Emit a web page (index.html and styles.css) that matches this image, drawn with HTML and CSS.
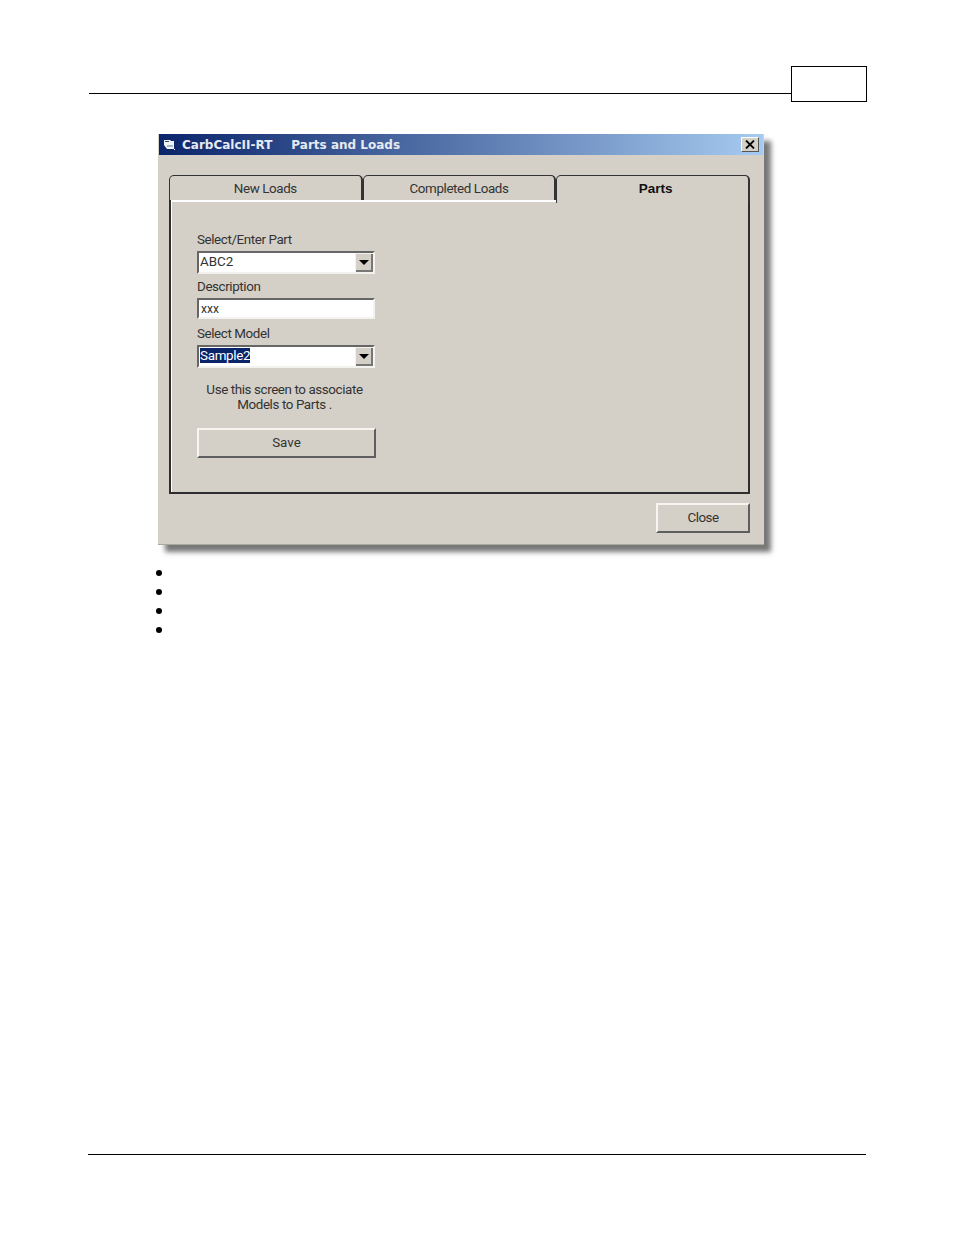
FILE: index.html
```html
<!DOCTYPE html>
<html>
    <head>
        <title>CarbCalcII-RT Parts and Loads</title>
        <meta charset="utf-8" />
        <link rel="stylesheet" href="styles.css">
    </head>
    <body>
        <div class="pageHeader">
            <div class="headerLine"></div>
            <div class="pageNumber"></div>
        </div>

        <div class="dialog">
            <div class="titleBar">
                <svg class="appIcon" width="12" height="12" viewBox="0 0 12 12">
                    <path d="M0 1h6l1 1h3v8H3L0 6z" fill="#f2f5f8"/>
                    <path d="M1 2h4v1H1z" fill="#33456e"/>
                    <path d="M3 6h6v2H3z" fill="#a8b6c8"/>
                    <path d="M10 10h1v1h-1z" fill="#fff"/>
                </svg>
                <span class="titleText">CarbCalcII-RT</span>
                <span class="titleText titleSecond">Parts and Loads</span>
                <div class="closeX">
                    <svg width="10" height="9" viewBox="0 0 10 9">
                        <path d="M1 0.5L9 8.5M9 0.5L1 8.5" stroke="#000" stroke-width="1.8" fill="none"/>
                    </svg>
                </div>
            </div>

            <div class="dialogBody">
                <div class="tabs">
                    <div class="tab">New Loads</div>
                    <div class="tab">Completed Loads</div>
                    <div class="tab active">Parts</div>
                </div>
                <div class="panel">
                    <div class="partForm">
                        <div class="fieldLabel">Select/Enter Part</div>
                        <div class="field combo">
                            <span class="value">ABC2</span>
                            <span class="dropBtn"><i class="arrow"></i></span>
                        </div>
                        <div class="fieldLabel">Description</div>
                        <div class="field textbox"><span class="value small">xxx</span></div>
                        <div class="fieldLabel">Select Model</div>
                        <div class="field combo">
                            <span class="value"><span class="selected">Sample2</span></span>
                            <span class="dropBtn"><i class="arrow"></i></span>
                        </div>
                        <p class="note">Use this screen to associate<br>Models to Parts .</p>
                        <div class="button saveBtn">Save</div>
                    </div>
                </div>
                <div class="dialogFooter">
                    <div class="button closeBtn">Close</div>
                </div>
            </div>
        </div>

        <ul class="bullets">
            <li>&nbsp;</li>
            <li>&nbsp;</li>
            <li>&nbsp;</li>
            <li>&nbsp;</li>
        </ul>

        <div class="pageFooter"></div>
    </body>
</html>
```

FILE: styles.css
```css
html {
    font-family: Roboto, "Liberation Sans", Arial, sans-serif;
    background: #fff;
}
body {
    margin: 0;
    height: 1235px;
    overflow: hidden;
}

.pageHeader {
    display: flex;
    align-items: flex-start;
    margin: 66px 0 0 89px;
    width: 778px;
}
.headerLine {
    flex: 1;
    height: 27px;
    border-bottom: 1px solid #000;
}
.pageNumber {
    width: 74px;
    height: 34px;
    border: 1px solid #000;
}

.dialog {
    width: 606px;
    height: 411px;
    margin: 32px 0 0 158px;
    background: #d4d0c8;
    border-bottom: 1px solid #aaa79f;
    box-sizing: border-box;
    box-shadow: 7px 7px 5px #777;
    color: #333;
    font-size: 13.4px;
}

.titleBar {
    display: flex;
    align-items: center;
    height: 21px;
    margin: 0 1px;
    padding: 0 4px 0 5px;
    background: linear-gradient(to right, #0a246a, #a6caf0);
    color: #fff;
}
.appIcon {
    margin-right: 6px;
}
.titleText {
    font-family: "DejaVu Sans", sans-serif;
    font-size: 12px;
    font-weight: bold;
    color: #e6eaf2;
}
.titleSecond {
    margin-left: 19px;
}
.closeX {
    display: flex;
    align-items: center;
    justify-content: center;
    width: 16px;
    height: 13px;
    margin-left: auto;
    background: #d4d0c8;
    border: 1px solid;
    border-color: #fff #555 #555 #fff;
}

.dialogBody {
    padding: 20px 14px 0 11px;
}

.tabs {
    display: flex;
    height: 25px;
}
.tab {
    flex: 1 1 0;
    position: relative;
    z-index: 0;
    box-sizing: border-box;
    height: 25px;
    padding-top: 5px;
    text-align: center;
    border: 1px solid #333;
    border-right-width: 2px;
    border-bottom: 0;
    border-radius: 5px 5px 0 0;
    line-height: 16px;
    letter-spacing: -0.4px;
}
.tab.active {
    z-index: 1;
    height: 28px;
    background: #d4d0c8;
    font-family: "Liberation Sans", Arial, sans-serif;
    font-size: 13.5px;
    font-weight: bold;
    letter-spacing: 0;
    text-indent: 6px;
    color: #111;
}

.panel {
    box-sizing: border-box;
    height: 294px;
    padding: 32px 0 0 26px;
    border: 2px solid #2e2e2e;
    border-top: 0;
    box-shadow: inset 1px 2px 0 #fff;
}
.partForm {
    width: 179px;
}
.fieldLabel {
    height: 16px;
    line-height: 16px;
    margin-bottom: 3px;
    letter-spacing: -0.4px;
}

.field {
    display: flex;
    box-sizing: border-box;
    width: 178px;
    background: #fff;
    border: 2px solid;
    border-color: #666 #f4f2ee #f4f2ee #666;
    line-height: 18px;
}
.combo {
    height: 23px;
    margin-bottom: 5px;
}
.textbox {
    height: 21px;
    margin-bottom: 7px;
}
.value {
    flex: 1;
    padding-left: 1px;
}
.value.small {
    font-size: 12px;
    padding-left: 2px;
}
.selected {
    background: #0a246a;
    color: #fff;
    letter-spacing: -0.3px;
}
.dropBtn {
    display: flex;
    align-items: center;
    justify-content: center;
    width: 17px;
    background: #d4d0c8;
    border-left: 1px solid #f4f2ee;
    border-top: 1px solid #f4f2ee;
    box-shadow: inset -2px -2px 0 #777;
}
.arrow {
    width: 0;
    height: 0;
    margin: 0 2px 2px 0;
    border-style: solid;
    border-width: 5px 5px 0 5px;
    border-color: #000 transparent transparent transparent;
}

.note {
    margin: 14px 4px 0 0;
    text-align: center;
    line-height: 15px;
    letter-spacing: -0.4px;
}

.button {
    box-sizing: border-box;
    text-align: center;
    background: #d4d0c8;
    border: 2px solid;
    border-color: #f6f5f2 #5e5e5e #5e5e5e #f6f5f2;
}
.saveBtn {
    width: 179px;
    height: 30px;
    margin-top: 16px;
    line-height: 25px;
}
.dialogFooter {
    display: flex;
    justify-content: flex-end;
    margin-top: 9px;
}
.closeBtn {
    width: 94px;
    height: 30px;
    line-height: 25px;
    letter-spacing: -0.5px;
}

.bullets {
    margin: 18px 0 0 0;
    padding: 0 0 0 175px;
    font-size: 19px;
    line-height: 19px;
}

.pageFooter {
    width: 778px;
    margin: 515px 0 0 88px;
    border-top: 1px solid #000;
}
```
